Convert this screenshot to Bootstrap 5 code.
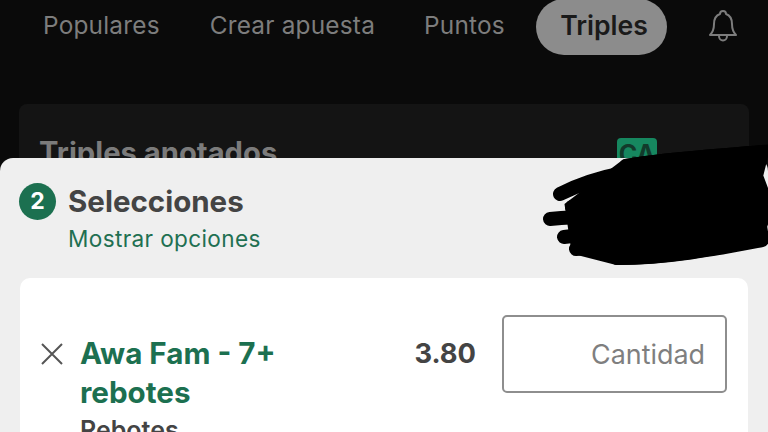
<!DOCTYPE html>
<html lang="es"><head><meta charset="utf-8"><title>Selecciones</title>
<link href="https://cdn.jsdelivr.net/npm/bootstrap@5.3.0/dist/css/bootstrap.min.css" rel="stylesheet">
<style>
html,body{height:432px;overflow:hidden}
body{background:#0a0a0a;font-family:Inter,"Liberation Sans",sans-serif;width:768px;position:relative}
.topnav{height:104px;align-items:flex-start;padding-left:43px}
.tab-it{font-size:24.4px;line-height:50px;color:#7d7d7d;height:50px;letter-spacing:.2px;white-space:nowrap}
.tab-a{margin-left:50px}.tab-b{margin-left:49px}
.tab-on{position:absolute;left:536px;top:-1px;background:#8c8c8c;color:#1a1a1a;font-weight:600;width:131px;height:56px;line-height:52px;border-radius:28px;text-align:center;font-size:26.6px;letter-spacing:0;padding-left:5px}
.bell{position:absolute;left:708px;top:8px}
.darkcard{margin:0 19px;height:80px;background:#141414;border-radius:8px;padding:32px 20px 0;position:relative}
.darkcard h2{font-size:29.2px;font-weight:700;color:#7b7b7b;line-height:34px;margin:0;white-space:nowrap}
.ca{position:absolute;left:598px;top:34px;width:40px;height:30px;background:#16875f;border-radius:4px;color:#123a2b;font-weight:700;font-size:25px;line-height:33px;text-align:center}
.sheet{position:absolute;left:0;top:158px;width:768px;height:274px;overflow:hidden;background:#efefef;border-radius:13px 13px 0 0;padding:25px 19px 0}
.num{width:37px;height:37px;border-radius:50%;background:#1c7050;color:#fff;font-weight:700;font-size:23px;line-height:37px;text-align:center;flex:none}
.ttl{font-size:29.5px;font-weight:700;color:#444;line-height:37px;margin-left:12px}
.opts{color:#1f7052;font-size:22.6px;line-height:30px;margin:4px 0 0 49px;letter-spacing:.35px}
.betcard{background:#fff;border-radius:10px;width:728px;height:200px;margin:24px 0 0 1px;padding:37px 21px 0 20px;position:relative}
.xic{flex:none;margin-top:27px}
.betname{font-size:29.6px;font-weight:700;color:#1c7050;line-height:39px;margin-left:16px;width:290px;padding-top:19px}
.betsub{font-size:25px;font-weight:600;color:#444;line-height:32px;margin-top:2px}
.odds{font-size:27.3px;font-weight:700;color:#444;line-height:78px;width:72px;text-align:right;margin-left:35px}
.qty{width:225px;height:78px;border:2px solid #8e8e8e;border-radius:5px;margin-left:26px;font-size:26.9px;color:#7f7f7f;text-align:right;padding:0 20px;line-height:74px;flex:none}
.scribble{position:absolute;left:0;top:0;pointer-events:none}
</style></head><body>
<nav class="d-flex topnav">
<span class="tab-it">Populares</span><span class="tab-it tab-a">Crear apuesta</span><span class="tab-it tab-b">Puntos</span><span class="tab-it tab-on">Triples</span>
<svg class="bell" width="30" height="36" viewBox="0 0 30 36" fill="none" stroke="#7d7d7d" stroke-width="2" stroke-linejoin="round"><path d="M2 27c3-3 4-6 4-11 0-6 3-9 6-10 0-4 6-4 6 0 3 1 6 4 6 10 0 5 1 8 4 11z"/><path d="M11 28c0 6 8 6 8 0"/></svg>
</nav>
<div class="darkcard"><h2>Triples anotados</h2><span class="ca">CA</span></div>
<section class="sheet">
<div class="d-flex align-items-center"><span class="num">2</span><span class="ttl">Selecciones</span></div>
<div class="opts">Mostrar opciones</div>
<div class="betcard d-flex align-items-start">
<svg class="xic" width="24" height="24" viewBox="0 0 24 24" stroke="#555" stroke-width="2" fill="none"><path d="M2 2l20 20M22 2L2 22"/></svg>
<div class="betname">Awa Fam - 7+ rebotes<div class="betsub">Rebotes</div></div>
<div class="odds">3.80</div>
<div class="qty">Cantidad</div>
</div>
</section>
<svg class="scribble" width="768" height="432" viewBox="0 0 768 432" fill="#000" stroke="#000" stroke-linecap="round" stroke-width="14"><path d="M626 166C670 158 720 156 762 152L756 176L762 192L768 204L760 226L762 238C720 248 670 258 617 258L578 248L572 207Z"/><path fill="none" d="M626 166C670 158 720 156 762 152M560 194C600 174 640 168 700 166M572 207C620 192 680 190 760 188M550 219C610 214 680 212 760 208M564 237C620 230 680 225 760 222M576 249C640 242 700 236 762 238M617 258C670 258 720 248 762 240"/></svg>
</body></html>
